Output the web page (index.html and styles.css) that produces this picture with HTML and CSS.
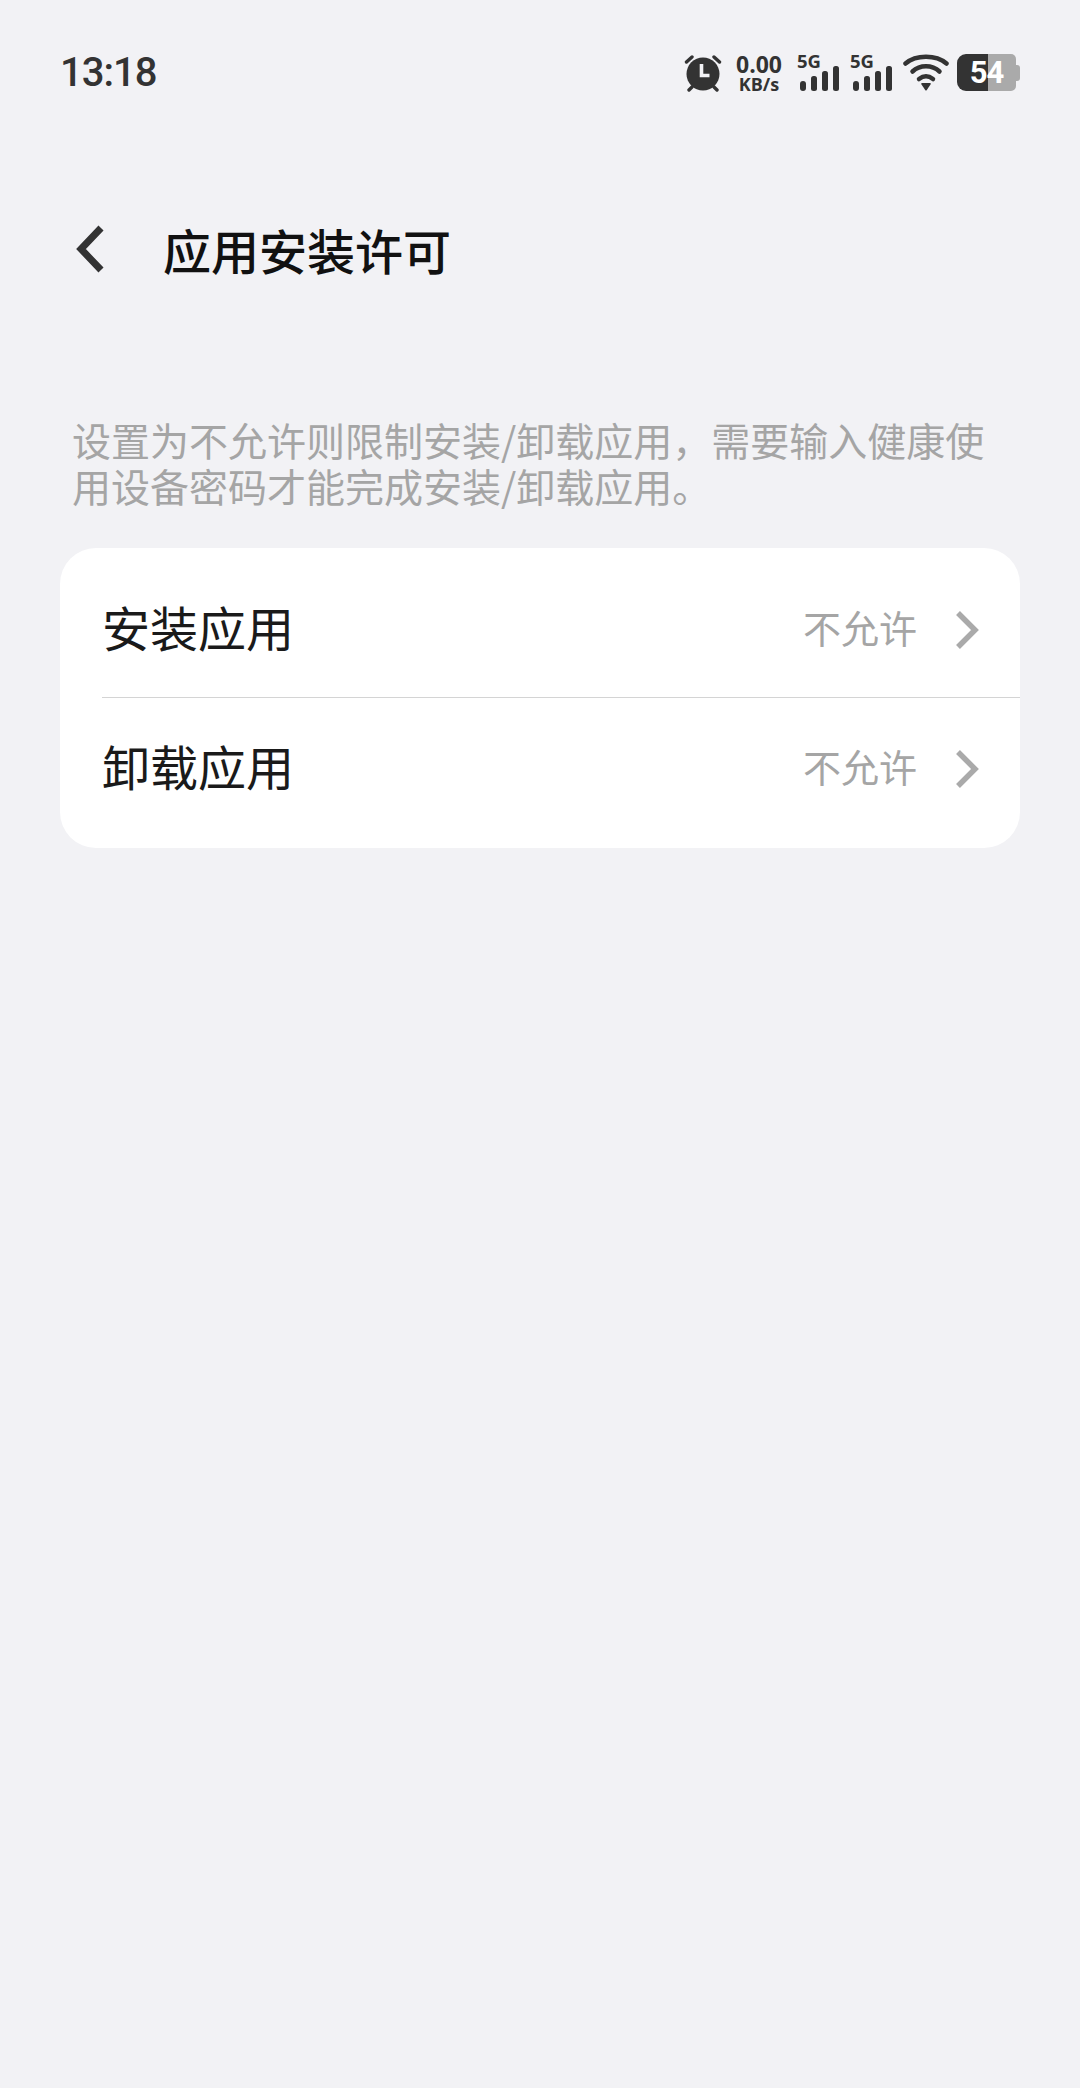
FILE: index.html
```html
<!DOCTYPE html>
<html>
<head>
    <title>应用安装许可</title>
    <link rel="stylesheet" href="styles.css">
</head>
<body>

<div class="status-bar">
    <span class="time">13:18</span>
    <div class="status-icons">
        <svg class="alarm" width="38" height="38" viewBox="0 0 38 38">
            <circle cx="19" cy="20" r="16.5" fill="#333"/>
            <path d="M2.5 8 L8 3 M35.5 8 L30 3 M5 36 L8 33 M33 36 L30 33" stroke="#333" stroke-width="3.4" stroke-linecap="round" fill="none"/>
            <path d="M17.5 10 V21.5 H25.5" stroke="#f2f2f5" stroke-width="3.6" fill="none"/>
        </svg>
        <div class="net-speed">
            <span class="net-value">0.00</span>
            <span class="net-unit">KB/s</span>
        </div>
        <div class="signal">
            <span class="signal-label">5G</span>
            <svg class="signal-bars" width="40" height="25" viewBox="0 0 40 25">
                <rect x="0" y="15" width="6" height="10" rx="3" fill="#333"/>
                <rect x="11" y="10" width="6" height="15" rx="2.5" fill="#333"/>
                <rect x="22" y="5" width="6" height="20" rx="2.5" fill="#333"/>
                <rect x="33" y="0" width="6" height="25" rx="2.5" fill="#333"/>
            </svg>
        </div>
        <div class="signal">
            <span class="signal-label">5G</span>
            <svg class="signal-bars" width="40" height="25" viewBox="0 0 40 25">
                <rect x="0" y="15" width="6" height="10" rx="3" fill="#333"/>
                <rect x="11" y="10" width="6" height="15" rx="2.5" fill="#333"/>
                <rect x="22" y="5" width="6" height="20" rx="2.5" fill="#333"/>
                <rect x="33" y="0" width="6" height="25" rx="2.5" fill="#333"/>
            </svg>
        </div>
        <svg class="wifi" width="46" height="37" viewBox="0 0 46 37">
            <path d="M2.5 9.5 C13 0.5 33 0.5 43.5 9.5" stroke="#333" stroke-width="4.5" stroke-linecap="round" fill="none"/>
            <path d="M9.5 17.5 C17 10.5 29 10.5 36.5 17.5" stroke="#333" stroke-width="4.5" stroke-linecap="round" fill="none"/>
            <path d="M16 25 C20.5 21.5 25.5 21.5 30 25" stroke="#333" stroke-width="4.5" stroke-linecap="round" fill="none"/>
            <path d="M19 29 L27 29 Q28.5 29 27.5 30.5 L23.8 36 Q23 37 22.2 36 L18.5 30.5 Q17.5 29 19 29 Z" fill="#333"/>
        </svg>
        <div class="battery"><span>54</span></div>
        <div class="battery-nub"></div>
    </div>
</div>

<div class="nav-bar">
    <svg class="back" width="30" height="48" viewBox="0 0 30 48">
        <path d="M26 3 L6 24 L26 45" stroke="#333" stroke-width="7" fill="none"/>
    </svg>
    <h1>应用安装许可</h1>
</div>

<p class="description">设置为不允许则限制安装/卸载应用，需要输入健康使用设备密码才能完成安装/卸载应用。</p>

<div class="card">
    <div class="row row-first">
        <span class="row-title">安装应用</span>
        <span class="row-value">不允许</span>
        <svg class="chevron" width="24" height="38" viewBox="0 0 24 38">
            <path d="M3 2 L20 19 L3 36" stroke="#aaa" stroke-width="5.5" fill="none"/>
        </svg>
    </div>
    <div class="row row-last">
        <span class="row-title">卸载应用</span>
        <span class="row-value">不允许</span>
        <svg class="chevron" width="24" height="38" viewBox="0 0 24 38">
            <path d="M3 2 L20 19 L3 36" stroke="#aaa" stroke-width="5.5" fill="none"/>
        </svg>
    </div>
</div>

</body>
</html>
```

FILE: styles.css
```css
body {
    font-family: "Noto Sans CJK SC", "Noto Sans", sans-serif;
    background-color: #f2f2f5;
    margin: 0;
    padding: 0;
}

.status-bar {
    display: flex;
    justify-content: space-between;
    align-items: center;
    height: 37px;
    padding: 54px 60px 0 60px;
}

.time {
    font-family: Roboto, sans-serif;
    font-size: 40px;
    font-weight: 500;
    letter-spacing: -1px;
    color: #333;
}

.status-icons {
    display: flex;
    align-items: center;
}

.alarm {
    margin-right: 13px;
}

.net-speed {
    display: flex;
    flex-direction: column;
    align-items: center;
    width: 48px;
    margin-right: 14px;
    font-family: "Open Sans", sans-serif;
    font-weight: 700;
    color: #333;
}

.net-value {
    font-size: 23px;
    line-height: 22px;
}

.net-unit {
    font-size: 18px;
    line-height: 18px;
}

.signal {
    display: flex;
    flex-direction: column;
    width: 43px;
    margin-right: 10px;
}

.signal-label {
    font-family: "Open Sans", sans-serif;
    font-size: 18.5px;
    font-weight: 700;
    line-height: 14px;
    color: #333;
}

.signal-bars {
    display: block;
    margin-top: -2px;
    margin-left: 3px;
}

.wifi {
    margin-right: 8px;
}

.battery {
    width: 59px;
    height: 37px;
    border-radius: 9px 5px 5px 9px;
    background: linear-gradient(to right, #333 52%, #aaa 52%);
    text-align: center;
    font-family: Roboto, sans-serif;
    font-size: 31px;
    font-weight: 700;
    letter-spacing: -1px;
    line-height: 37px;
    color: #fff;
}

.battery-nub {
    width: 4px;
    height: 16px;
    border-radius: 0 3px 3px 0;
    background-color: #aaa;
}

.nav-bar {
    display: flex;
    align-items: center;
    height: 60px;
    padding: 128px 0 0 75px;
}

.back {
    margin-right: 58px;
}

h1 {
    margin: 0;
    font-size: 48px;
    font-weight: 500;
    line-height: 60px;
    color: #111;
}

.description {
    width: 950px;
    margin: 0;
    padding: 137px 0 0 72px;
    font-size: 39px;
    line-height: 46px;
    color: #a5a5a5;
}

.card {
    margin: 40px 60px 0 60px;
    background-color: #fff;
    border-radius: 36px;
}

.row {
    display: flex;
    align-items: center;
    margin-left: 42px;
    padding-right: 41px;
}

.row-first {
    height: 135px;
    padding-top: 14px;
    border-bottom: 1px solid #d4d4d4;
}

.row-last {
    height: 141px;
    padding-bottom: 9px;
}

.row-title {
    flex: 1;
    margin-bottom: 8px;
    font-size: 48px;
    color: #1a1a1a;
}

.row-value {
    margin-right: 38px;
    margin-bottom: 6px;
    font-size: 38px;
    color: #a5a5a5;
}
```
